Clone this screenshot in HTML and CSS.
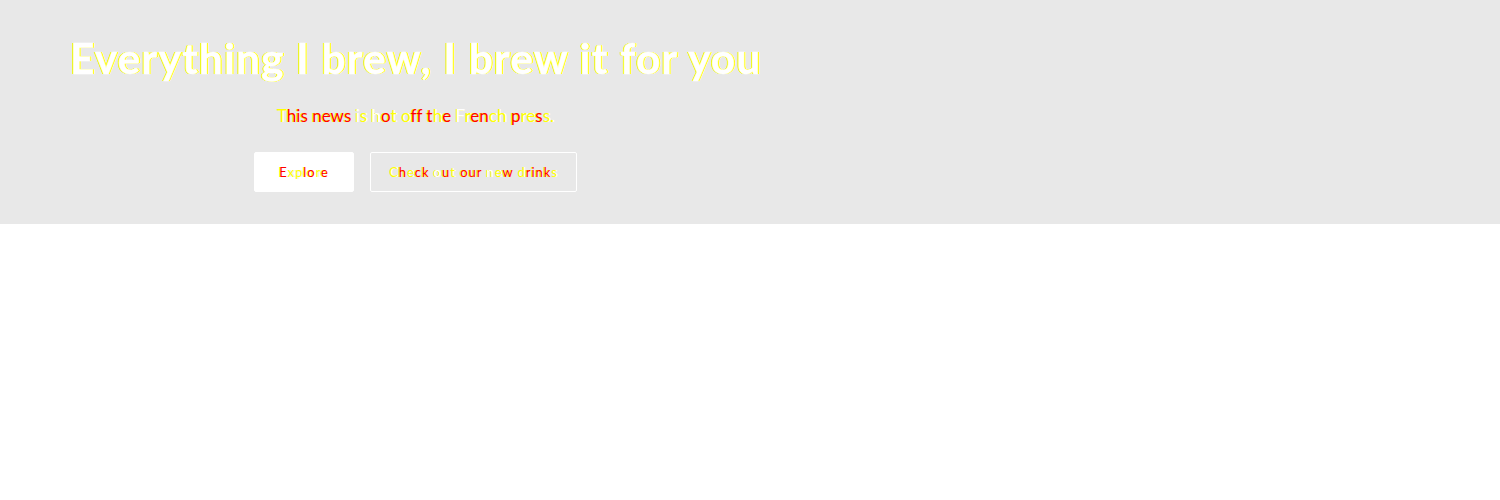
FILE: index.html
```html
<!DOCTYPE html>
<html lang="en">
<head>
<meta charset="utf-8">
<title>Brew</title>
<link rel="stylesheet" href="styles.css">
</head>
<body>
<section class="hero">
<div class="content">
<h1 class="title">Everything I brew, I brew it for you</h1>
<p class="subtitle">T<b>his</b> <b>news</b> <i>i</i>s <i>h</i><b>o</b>t o<b>ff</b> <b>t</b>h<b>e</b> <i>F</i>r<b>en</b>ch <b>p</b>re<b>s</b>s.</p>
<div class="actions">
<a class="button primary"><span class="label"><b>E</b>xp<b>lo</b>r<b>e</b></span></a>
<a class="button outline"><span class="label">C<b>h</b>e<b>ck</b> <i>o</i><b>u</b>t <b>our</b> <i>n</i>e<b>w</b> d<b>rink</b>s</span></a>
</div>
</div>
</section>
</body>
</html>
```
FILE: styles.css
```css
body { margin: 0; background: #fff; }
.hero { background: #e8e8e8; height: 224px; box-sizing: border-box; padding-top: 32px; }
.content { width: 831px; display: flex; flex-direction: column; align-items: center; font-family: Lato, sans-serif; white-space: nowrap; }
.title { margin: 0; height: 52px; line-height: 52px; font-size: 42px; font-weight: 700; letter-spacing: 1.35px; text-indent: 1.35px; color: #fff; -webkit-text-stroke: .5px #fff; text-shadow: -1px 0 #ff0, 1px 0 #ff0, -1px 0 #ff0, 1px 0 #ff0, -1px 0 #ff0, 1px 0 #ff0; }
.subtitle { margin: 20px 0 0; height: 24px; line-height: 24px; font-size: 17px; letter-spacing: .02px; color: #ff0; text-shadow: 1px 0 #fff; }
.subtitle b, .label b { font-weight: inherit; color: #f00; text-shadow: -1px 0 #ff0; }
.subtitle i, .label i { font-style: normal; color: #fff; text-shadow: -1px 0 #ff0; }
.actions { display: flex; gap: 16px; margin-top: 24px; }
.button { box-sizing: border-box; height: 40px; border: 1px solid #fff; border-radius: 2px; display: flex; align-items: center; justify-content: center; font-size: 13px; line-height: 20px; }
.primary { width: 100px; background: #fff; }
.outline { width: 207px; }
.label { color: #ff0; text-shadow: 1px 0 #e8e8e8; letter-spacing: .95px; }
.outline .label { text-shadow: 1px 0 #fff; }
```
